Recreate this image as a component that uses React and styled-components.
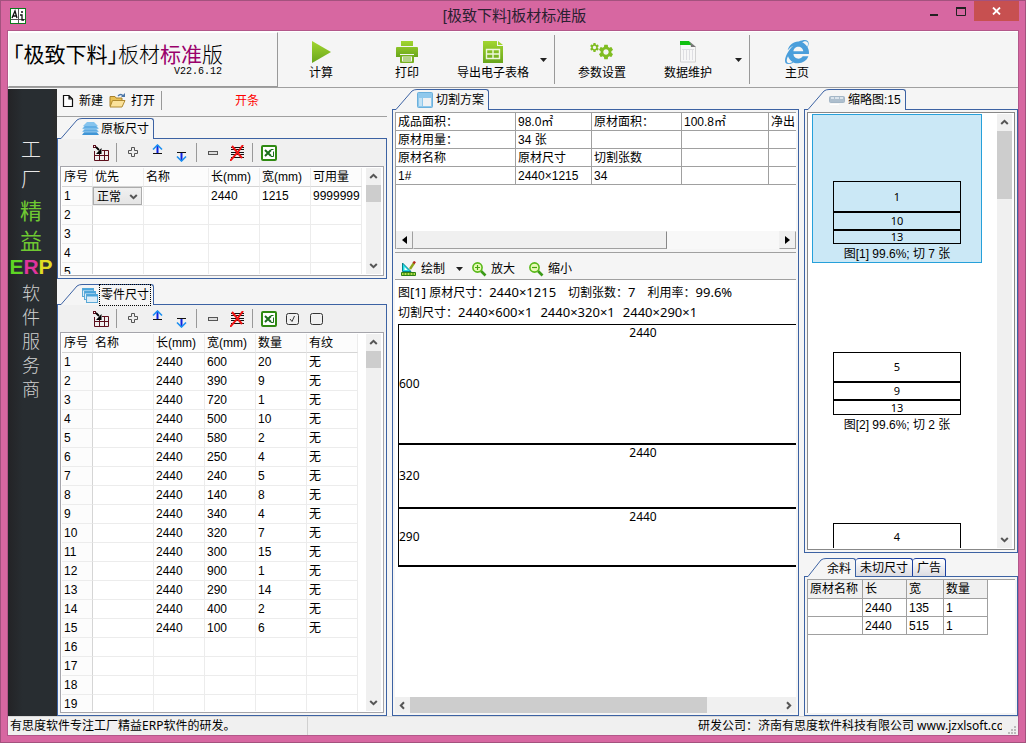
import React from 'react'
import styled, { createGlobalStyle } from 'styled-components'
import { FaInternetExplorer } from 'react-icons/fa'
import { MdSettings } from 'react-icons/md'

const boardCols = [
  { name: '序号', w: 31 },
  { name: '优先', w: 51 },
  { name: '名称', w: 65 },
  { name: '长(mm)', w: 51 },
  { name: '宽(mm)', w: 51 },
  { name: '可用量', w: 51 },
]

const partCols = [
  { name: '序号', w: 31 },
  { name: '名称', w: 61 },
  { name: '长(mm)', w: 51 },
  { name: '宽(mm)', w: 51 },
  { name: '数量', w: 51 },
  { name: '有纹', w: 51 },
]

const parts = [
  [600, 20], [390, 9], [720, 1], [500, 10], [580, 2],
  [250, 4], [240, 5], [140, 8], [340, 4], [320, 7],
  [300, 15], [900, 1], [290, 14], [400, 2], [100, 6],
  null, null, null, null,
]

const summaryCols = [120, 76, 90, 87, 27]
const summary = [
  ['成品面积：', '98.0㎡', '原材面积：', '100.8㎡', '净出'],
  ['原材用量：', '34 张', '', '', ''],
  ['原材名称', '原材尺寸', '切割张数', '', ''],
  ['1#', '2440×1215', '34', '', ''],
]

const strips = [
  { size: 600, h: 120 },
  { size: 320, h: 64 },
  { size: 290, h: 58 },
]

const thumbs = [
  { title: '图[1] 99.6%; 切 7 张', active: true, rows: [[1, 31], [10, 18], [13, 14]] },
  { title: '图[2] 99.6%; 切 2 张', rows: [[5, 30], [9, 18], [13, 15]] },
  { rows: [[4, 27]] },
]

const leftCols = [55, 44, 37, 44]

const Green = ({ id }) => (
  <linearGradient id={id} x1='0' y1='0' x2='0' y2='1'>
    <stop offset='0' stopColor='#a2d62f' />
    <stop offset='1' stopColor='#69a61c' />
  </linearGradient>
)

const PlayIcon = () => (
  <svg width='24' height='24' viewBox='0 0 24 24'>
    <defs><Green id='gPlay' /></defs>
    <path d='M3 1L22 12L3 23Z' fill='url(#gPlay)' />
  </svg>
)

const PrinterIcon = () => (
  <svg width='24' height='24' viewBox='0 0 24 24'>
    <defs><Green id='gPrint' /></defs>
    <path d='M6 1H18V6H6ZM2 7H22Q23 7 23 8V17H19V14H5V17H1V8Q1 7 2 7Z' fill='url(#gPrint)' />
    <path d='M5 15H19V22Q19 23 18 23H6Q5 23 5 22Z' fill='#75b01f' />
    <path d='M7 16.500H17V21.500H7Z' fill='#f5f5f5' />
    <path d='M8 18H16M8 20H16' stroke='#75b01f' />
  </svg>
)

const SheetIcon = () => (
  <svg width='24' height='24' viewBox='0 0 24 24'>
    <defs><Green id='gSheet' /></defs>
    <path d='M2 1H16V6H22V23H2Z' fill='url(#gSheet)' />
    <path d='M17 1L22 5H17Z' fill='#a2d62f' />
    <path d='M5.500 9.500H18.500V18.500H5.500ZM12 9.500V18.500M5.500 14H18.500' fill='none' stroke='#eef7dd' strokeWidth='1.400' />
  </svg>
)

const DataIcon = () => (
  <svg width='24' height='24' viewBox='0 0 24 24'>
    <path d='M4.500 2H14L19.500 7V22H4.500Z' fill='#f7f7f7' stroke='#d2d2d2' />
    <path d='M4 1H13L16 5H4Z' fill='#10c010' />
    <path d='M14 2L20 7H15Z' fill='#777' />
    <path d='M7.500 9V20M10.500 9V20M13.500 9V20M16.500 9V20M6 9.500H18' stroke='#dedee2' />
  </svg>
)

const AppIcon = () => (
  <svg width='16' height='16' viewBox='0 0 16 16'>
    <rect x='0.500' y='0.500' width='15' height='15' fill='#fff' stroke='#0b7a1d' />
    <path d='M8.500 1V15M1 11.500H15' stroke='#555' />
    <path d='M2 10L5 3L7 10M3 8H7M11 4H13M10 7H12V12H14' fill='none' stroke='#111' strokeWidth='1.300' />
  </svg>
)

const NewIcon = () => (
  <svg width='12' height='14' viewBox='0 0 12 14'>
    <path d='M1.500 1.500H7L10.500 5V12.500H1.500ZM7 1.500V5H10.500' fill='#fff' stroke='#111' strokeWidth='1.200' />
  </svg>
)

const OpenIcon = () => (
  <svg width='17' height='15' viewBox='0 0 17 15'>
    <path d='M1 3.500H6L7 5H13V13H1Z' fill='#e9c155' stroke='#a8812c' />
    <path d='M3.500 7.500H16L13 14H1Z' fill='#fbe29a' stroke='#b08a30' />
    <path d='M9 3Q12 0 14 3' fill='none' stroke='#4b76a8' strokeWidth='1.400' />
    <path d='M12 4H16V0Z' fill='#4b76a8' />
  </svg>
)

const LayersIcon = () => (
  <svg width='17' height='14' viewBox='0 0 17 14'>
    <path d='M3 9H14L17 13H0Z' fill='#3f95d6' />
    <path d='M3 6H14L17 10H0Z' fill='#5fabe2' stroke='#d8ecfa' strokeWidth='0.500' />
    <path d='M3 3H14L17 7H0Z' fill='#62aee4' stroke='#d8ecfa' strokeWidth='0.500' />
    <path d='M5 0H12L16 4H1Z' fill='#86c4ee' />
  </svg>
)

const CascadeIcon = () => (
  <svg width='17' height='16' viewBox='0 0 17 16'>
    <g fill='#dcedf8' stroke='#5ba9d6'>
      <rect x='0.500' y='1.500' width='11' height='8' />
      <rect x='2.500' y='4.500' width='11' height='8' />
      <rect x='4.500' y='7.500' width='11' height='8' />
    </g>
    <path d='M1 2.500H11M3 5.500H13M5 8.500H15' stroke='#4aa5dc' strokeWidth='2' />
  </svg>
)

const PlanIcon = () => (
  <svg width='17' height='16' viewBox='0 0 17 16'>
    <rect x='0.500' y='0.500' width='15' height='15' rx='1' fill='#8fc8ec' stroke='#6bb0dc' />
    <path d='M6 6H14V14H6Z' fill='#f0f1f3' />
    <path d='M2 6H5V14H2Z' fill='#c3e2f5' />
  </svg>
)

const ThumbIcon = () => (
  <svg width='17' height='9' viewBox='0 0 17 9'>
    <rect x='0.500' y='0.500' width='15' height='6' rx='1' fill='#aebfce' stroke='#a4b6c6' />
    <path d='M2 1H5V3H2ZM6 1H10V3H6ZM11 1H14V3H11Z' fill='#dbe4ec' />
    <path d='M1 8.500H10' stroke='#fff' />
  </svg>
)

const GridIcon = () => (
  <svg width='16' height='16' viewBox='0 0 16 16'>
    <path d='M1.500 6V15.500H15.500V5.500H9M1.500 10.500H15.500M6.500 9V15.500M11.500 5.500V15.500' fill='none' stroke='#5c0f1c' />
    <rect x='0.500' y='0.500' width='2' height='2' fill='#fff' stroke='#5c0f1c' />
    <path d='M3 2L6 5' stroke='#000' strokeWidth='1.800' />
    <path d='M8.500 3V9H3Z' fill='#000' />
  </svg>
)

const PlusIcon = () => (
  <svg width='11' height='11' viewBox='0 0 11 11'>
    <path d='M3.500 0.500H6.500V3.500H9.500V6.500H6.500V9.500H3.500V6.500H0.500V3.500H3.500Z' fill='#eee' stroke='#555' />
  </svg>
)

const MinusIcon = () => (
  <svg width='11' height='4' viewBox='0 0 11 4'>
    <rect x='0.500' y='0.500' width='9' height='3' fill='#ddd' stroke='#555' />
  </svg>
)

const UpIcon = () => (
  <svg width='11' height='18' viewBox='0 0 11 18'>
    <path d='M5.500 1V9' stroke='#0f22e0' strokeWidth='2' />
    <path d='M1 5.500L5.500 1L10 5.500' fill='none' stroke='#1b8ff0' strokeWidth='1.600' />
    <path d='M1 9.500H10' stroke='#111' />
  </svg>
)

const DownIcon = () => (
  <svg width='11' height='18' viewBox='0 0 11 18'>
    <path d='M1 8.500H10' stroke='#111' />
    <path d='M5.500 9V17' stroke='#0f22e0' strokeWidth='2' />
    <path d='M1 12.500L5.500 17L10 12.500' fill='none' stroke='#1b8ff0' strokeWidth='1.600' />
  </svg>
)

const ClearIcon = () => (
  <svg width='15' height='16' viewBox='0 0 15 16'>
    <path d='M1 2.500H14M1 4.500H14M1 7.500H14M1 9.500H14M1 12.500H14' stroke='#111' />
    <path d='M2 1L12 13M13 0L8 7L0 16' fill='none' stroke='#f01414' strokeWidth='2' />
  </svg>
)

const ExcelIcon = () => (
  <svg width='16' height='16' viewBox='0 0 16 16'>
    <rect x='1' y='1' width='14' height='14' rx='1' fill='#fff' stroke='#2f8a12' strokeWidth='2' />
    <path d='M4 5L10 11M10 5L4 11' stroke='#1c6f1c' strokeWidth='2' />
    <path d='M10 4.500H12.500M12.500 6.500V11.500H10' fill='none' stroke='#1c6f1c' />
  </svg>
)

const BoxIcon = ({ checked }) => (
  <svg width='14' height='14' viewBox='0 0 14 14'>
    <rect x='0.500' y='1.500' width='12' height='11' rx='2' fill='none' stroke='#333' />
    {checked && <path d='M4 7L6 9.500L8.500 4' fill='none' stroke='#333' />}
  </svg>
)

const DrawIcon = () => (
  <svg width='16' height='16' viewBox='0 0 16 16'>
    <path d='M1.500 2V10.500H10Z' fill='#22dfe6' stroke='#08808a' />
    <path d='M3.500 6V9H6.500Z' fill='#fff' />
    <path d='M0.500 11.500H14.500V14.500H0.500Z' fill='#b6e04a' stroke='#2d8012' />
    <path d='M3 12V14M6 12V14M9 12V14M12 12V14' stroke='#2d8012' />
    <path d='M9 8L13 2' stroke='#8fa51c' strokeWidth='2.400' />
    <path d='M12.500 2.500L14 0.500' stroke='#b42b1c' strokeWidth='2.400' />
  </svg>
)

const ZoomIcon = ({ plus }) => (
  <svg width='15' height='15' viewBox='0 0 15 15'>
    <path d='M9 9L13.500 13.500' stroke='#3b9a18' strokeWidth='2.600' />
    <circle cx='5.500' cy='5.500' r='4.600' fill='#e9fbb8' stroke='#58b818' strokeWidth='1.600' />
    <path d={plus ? 'M3 5.500H8M5.500 3V8' : 'M3 5.500H8'} stroke='#45a512' strokeWidth='1.200' />
  </svg>
)

const CaretIcon = () => (
  <svg width='7' height='4' viewBox='0 0 7 4'>
    <path d='M0 0H7L3.500 4Z' fill='#222' />
  </svg>
)

const turns = { up: 0, right: 90, down: 180, left: 270 }
const Chevron = ({ dir }) => (
  <svg width='9' height='9' viewBox='0 0 9 9'>
    <path d='M1.200 6L4.500 2.800L7.800 6' fill='none' stroke='#555' strokeWidth='2' transform={`rotate(${turns[dir]} 4.5 4.5)`} />
  </svg>
)

const Slant = ({ w, h }) => (
  <svg width={w} height={h} viewBox={`0 0 ${w} ${h}`}>
    <path d={`M0 ${h}L1 ${h - 0.5}L${w - 5} 2Q${w - 3} 0.500 ${w} 0.500V${h}Z`} fill='#f5f5f5' />
    <path d={`M0 ${h - 0.5}H1L${w - 5} 2Q${w - 3} 0.500 ${w} 0.500`} fill='none' stroke='#3c62a3' />
  </svg>
)

const PageTab = ({ icon, focus, children }) => (
  <Tab>
    <Slant w={icon ? 22 : 19} h={icon ? 21 : 19} />
    <TabLabel>
      {icon}
      <TabText $focus={focus}>{children}</TabText>
    </TabLabel>
  </Tab>
)

const EditBar = ({ checks }) => (
  <EditTools>
    <IconButton aria-label='表格'><GridIcon /></IconButton>
    <Divider />
    <IconButton aria-label='添加'><PlusIcon /></IconButton>
    <IconButton aria-label='上移'><UpIcon /></IconButton>
    <IconButton aria-label='下移'><DownIcon /></IconButton>
    <Divider />
    <IconButton aria-label='删除'><MinusIcon /></IconButton>
    <IconButton aria-label='清空'><ClearIcon /></IconButton>
    <Divider />
    <IconButton aria-label='Excel'><ExcelIcon /></IconButton>
    {checks && <IconButton aria-label='全选'><BoxIcon checked /></IconButton>}
    {checks && <IconButton aria-label='全不选'><BoxIcon /></IconButton>}
  </EditTools>
)

const VScroll = ({ thumb }) => (
  <VBar>
    <ScrollArrow aria-label='向上'><Chevron dir='up' /></ScrollArrow>
    <VThumb $size={thumb} />
    <ScrollArrow aria-label='向下'><Chevron dir='down' /></ScrollArrow>
  </VBar>
)

const DataHead = ({ cols }) => (
  <>
    <colgroup>{cols.map((c) => <Col key={c.name} $w={c.w} />)}</colgroup>
    <thead>
      <tr>{cols.map((c) => <th key={c.name}>{c.name}</th>)}</tr>
    </thead>
  </>
)

const App = () => {
  return (
    <Window>
      <GlobalStyle />
      <TitleBar>
        <AppIcon />
        <Title>[极致下料]板材标准版</Title>
        <Controls>
          <WinButton aria-label='最小化'>
            <svg width='8' height='10' viewBox='0 0 8 10'><path d='M0 9H8' stroke='#222' strokeWidth='2' /></svg>
          </WinButton>
          <WinButton aria-label='最大化'>
            <svg width='10' height='9' viewBox='0 0 10 9'><path d='M0.500 1H9.500V8.500H0.500Z' fill='none' stroke='#222' /><path d='M0 1H10' stroke='#222' strokeWidth='2' /></svg>
          </WinButton>
          <CloseButton aria-label='关闭'>
            <svg width='9' height='8' viewBox='0 0 9 8'><path d='M1 0.500L8 7.500M8 0.500L1 7.500' stroke='#fff' strokeWidth='1.800' /></svg>
          </CloseButton>
        </Controls>
      </TitleBar>

      <Client>
        <Header>
          <Logo>
            <LogoName>
              <b>「极致下料」</b>板材<em>标准</em>版
            </LogoName>
            <Version>V22.6.12</Version>
          </Logo>
          <BigButton><PlayIcon />计算</BigButton>
          <BigButton><PrinterIcon />打印</BigButton>
          <BigButton><SheetIcon />导出电子表格</BigButton>
          <DropButton aria-label='更多导出'><CaretIcon /></DropButton>
          <HeaderLine />
          <BigButton>
            <Gears><MdSettings size={11} /><MdSettings size={18} /></Gears>
            参数设置
          </BigButton>
          <BigButton><DataIcon />数据维护</BigButton>
          <DropButton aria-label='更多维护'><CaretIcon /></DropButton>
          <HeaderLine />
          <BigButton><FaInternetExplorer size={24} color='#4a9edb' />主页</BigButton>
        </Header>

        <Body>
          <Banner>
            <span>工</span>
            <span>厂</span>
            <strong>精</strong>
            <strong>益</strong>
            <Erp><i>E</i><i>R</i><i>P</i></Erp>
            {'软件服务商'.split('').map((c) => <small key={c}>{c}</small>)}
          </Banner>

          <Column>
            <FileBar>
              <FileButton><NewIcon />新建</FileButton>
              <FileButton><OpenIcon />打开</FileButton>
              <FileLine />
              <CutButton>开条</CutButton>
            </FileBar>

            <PageTab icon={<LayersIcon />}>原板尺寸</PageTab>
            <BoardPanel>
              <EditBar />
              <GridBox>
                <GridView>
                  <DataTable>
                    <DataHead cols={boardCols} />
                    <tbody>
                      <tr>
                        <td>1</td>
                        <SelectCell>
                          <Priority aria-label='优先' defaultValue='正常'>
                            <option>正常</option>
                            <option>优先</option>
                          </Priority>
                          <SelectMark><Chevron dir='down' /></SelectMark>
                        </SelectCell>
                        <td />
                        <td>2440</td>
                        <td>1215</td>
                        <td>9999999</td>
                      </tr>
                      {[2, 3, 4, 5].map((n) => (
                        <tr key={n}><td>{n}</td><td /><td /><td /><td /><td /></tr>
                      ))}
                    </tbody>
                  </DataTable>
                </GridView>
                <VScroll thumb={17} />
              </GridBox>
            </BoardPanel>

            <Gap />
            <PageTab icon={<CascadeIcon />} focus>零件尺寸</PageTab>
            <Panel>
              <EditBar checks />
              <GridBox>
                <GridView>
                  <DataTable>
                    <DataHead cols={partCols} />
                    <tbody>
                      {parts.map((p, i) => (
                        <tr key={i}>
                          <td>{i + 1}</td>
                          <td />
                          <td>{p && 2440}</td>
                          <td>{p && p[0]}</td>
                          <td>{p && p[1]}</td>
                          <td>{p && '无'}</td>
                        </tr>
                      ))}
                    </tbody>
                  </DataTable>
                </GridView>
                <VScroll thumb={17} />
              </GridBox>
            </Panel>
          </Column>

          <Column>
            <PageTab icon={<PlanIcon />}>切割方案</PageTab>
            <Panel>
              <SummaryBox>
                <GridView>
                  <SummaryTable>
                    <colgroup>{summaryCols.map((w) => <Col key={w} $w={w} />)}</colgroup>
                    <tbody>
                      {summary.map((row, i) => (
                        <tr key={i}>{row.map((c, j) => <td key={j}>{c}</td>)}</tr>
                      ))}
                    </tbody>
                  </SummaryTable>
                </GridView>
                <ClassicBar>
                  <ClassicArrow aria-label='向左'>
                    <svg width='5' height='8' viewBox='0 0 5 8'><path d='M5 0V8L0 4Z' /></svg>
                  </ClassicArrow>
                  <ClassicThumb />
                  <ClassicTrack />
                  <ClassicArrow aria-label='向右'>
                    <svg width='5' height='8' viewBox='0 0 5 8'><path d='M0 0V8L5 4Z' /></svg>
                  </ClassicArrow>
                </ClassicBar>
              </SummaryBox>
              <DrawBar>
                <DrawButton><DrawIcon />绘制</DrawButton>
                <DropButton aria-label='更多绘制'><CaretIcon /></DropButton>
                <DrawButton><ZoomIcon plus />放大</DrawButton>
                <DrawButton><ZoomIcon />缩小</DrawButton>
              </DrawBar>
              <Canvas>
                <Info>
                  <span>图<Num>[1]</Num> 原材尺寸：<Num>2440×1215</Num></span>
                  <span>切割张数：<Num>7</Num></span>
                  <span>利用率：<Num>99.6%</Num></span>
                </Info>
                <Info $tight>
                  <span>切割尺寸：<Num>2440×600×1</Num></span>
                  <Num>2440×320×1</Num>
                  <Num>2440×290×1</Num>
                </Info>
                <Sheet>
                  {strips.map((s) => (
                    <Strip key={s.size} $h={s.h}>
                      <StripTop>2440</StripTop>
                      <StripSide>{s.size}</StripSide>
                    </Strip>
                  ))}
                </Sheet>
              </Canvas>
              <HBar>
                <ScrollArrow aria-label='向左'><Chevron dir='left' /></ScrollArrow>
                <HTrack><HThumb /></HTrack>
                <ScrollArrow aria-label='向右'><Chevron dir='right' /></ScrollArrow>
              </HBar>
            </Panel>
          </Column>

          <Column>
            <PageTab icon={<ThumbIcon />}>缩略图:15</PageTab>
            <Panel>
              <ThumbBox>
                <ThumbList>
                  {thumbs.map((t, i) => (
                    <ThumbItem key={i} $active={t.active}>
                      {t.rows.map(([n, h]) => <ThumbStrip key={n} $h={h}>{n}</ThumbStrip>)}
                      {t.title && <p>{t.title}</p>}
                    </ThumbItem>
                  ))}
                </ThumbList>
                <VScroll thumb={68} />
              </ThumbBox>
            </Panel>
            <Gap />
            <TabRow>
              <PageTab>余料</PageTab>
              <BackTab>未切尺寸</BackTab>
              <BackTab>广告</BackTab>
            </TabRow>
            <LeftPanel>
              <LeftBox>
                <LineTable>
                  <colgroup>{leftCols.map((w, i) => <Col key={i} $w={w} />)}</colgroup>
                  <thead>
                    <tr><th>原材名称</th><th>长</th><th>宽</th><th>数量</th></tr>
                  </thead>
                  <tbody>
                    <tr><td /><td>2440</td><td>135</td><td>1</td></tr>
                    <tr><td /><td>2440</td><td>515</td><td>1</td></tr>
                  </tbody>
                </LineTable>
              </LeftBox>
            </LeftPanel>
          </Column>
        </Body>

        <StatusBar>
          <StatusText>有思度软件专注工厂精益ERP软件的研发。</StatusText>
          <Company>研发公司：济南有思度软件科技有限公司 www.jzxlsoft.com</Company>
          <Grip width='9' height='9' viewBox='0 0 9 9'>
            <path d='M6 0H8V2H6ZM3 3H5V5H3ZM6 3H8V5H6ZM0 6H2V8H0ZM3 6H5V8H3ZM6 6H8V8H6Z' fill='#bbb' />
          </Grip>
        </StatusBar>
      </Client>
    </Window>
  )
}

const GlobalStyle = createGlobalStyle`
  *{
    box-sizing: border-box;
  }
  body{
    margin: 0;
    color: #000;
    font-family: "Liberation Sans", "Noto Sans CJK SC", sans-serif;
    font-size: 12px;
    line-height: 18px;
  }
  button, select{
    margin: 0;
    padding: 0;
    border: 0;
    background: none;
    color: inherit;
    font: inherit;
  }
  svg{
    display: block;
    flex: none;
  }
`
const Window = styled.div`
  display: flex;
  flex-direction: column;
  height: 100vh;
  min-height: 600px;
  padding: 0 6px 6px;
  border: 1px solid #a3527e;
  background: #d767a1;
`
const TitleBar = styled.header`
  display: grid;
  grid-template-columns: 1fr auto 1fr;
  align-items: center;
  height: 29px;
  padding-left: 3px;
`
const Title = styled.h1`
  margin: 0;
  color: #2b2030;
  font-size: 15px;
  font-weight: 400;
`
const Controls = styled.div`
  display: flex;
  justify-content: flex-end;
  align-self: start;
`
const WinButton = styled.button`
  display: flex;
  justify-content: center;
  align-items: center;
  width: 27px;
  height: 20px;
`
const CloseButton = styled(WinButton)`
  width: 45px;
  background: #c75050;
`
const Client = styled.div`
  display: flex;
  flex: 1;
  flex-direction: column;
  min-height: 0;
  border: 1px solid #b3578a;
  background: #f5f5f5;
`
const Header = styled.div`
  display: flex;
  flex: none;
  height: 57px;
  border-top: 1px solid #fff;
  border-bottom: 1px solid #a0a0a0;
`
const Logo = styled.div`
  display: flex;
  flex-direction: column;
  width: 270px;
  padding: 6px 0 0 4px;
  border: 1px solid #fff;
  border-right-color: #999;
  border-bottom-color: #999;
`
const LogoName = styled.div`
  font-family: "Noto Sans CJK SC", sans-serif;
  font-feature-settings: "halt";
  font-size: 21px;
  font-weight: 300;
  line-height: 28px;
  white-space: nowrap;
  b{
    font-weight: 400;
  }
  em{
    color: #99006b;
    font-style: normal;
    font-weight: 400;
  }
`
const Version = styled.div`
  width: 209px;
  font-family: "Liberation Mono", monospace;
  font-size: 10px;
  line-height: 10px;
  text-align: right;
`
const BigButton = styled.button`
  display: flex;
  flex-direction: column;
  align-items: center;
  width: 86px;
  padding-top: 8px;
  line-height: 18px;
`
const Gears = styled.span`
  display: flex;
  align-items: center;
  height: 24px;
  color: #80bd22;
  svg:first-child{
    align-self: flex-start;
    margin: 2px -3px 0 0;
  }
`
const DropButton = styled.button`
  display: flex;
  justify-content: center;
  align-items: center;
  width: 14px;
`
const HeaderLine = styled.div`
  width: 1px;
  margin: 3px 4px;
  background: #999;
`
const Body = styled.main`
  display: grid;
  flex: 1;
  grid-template-columns: 49px 330px minmax(0, 1fr) 214px;
  min-height: 0;
  padding-top: 1px;
`
const Banner = styled.aside`
  display: flex;
  flex-direction: column;
  align-items: center;
  padding: 45px 3px 0 0;
  background: linear-gradient(90deg, #232326, #282d31 30%, #282d31 85%, #2c2c2c);
  color: #e8e8e8;
  font-family: "Noto Sans CJK SC", sans-serif;
  font-size: 20px;
  font-weight: 300;
  line-height: 30px;
  strong{
    color: #6fc932;
    font-size: 22px;
    font-weight: 400;
  }
  small{
    color: #d0d0d0;
    font-size: 18px;
    line-height: 24px;
  }
`
const Erp = styled.div`
  font-family: "Liberation Sans", sans-serif;
  font-size: 21px;
  font-weight: 700;
  line-height: 26px;
  i{
    color: #5fd424;
    font-style: normal;
  }
  i:nth-child(2){
    color: #e0349c;
  }
  i:nth-child(3){
    color: #e0dc24;
  }
`
const Column = styled.section`
  display: flex;
  flex-direction: column;
  min-width: 0;
  min-height: 0;
  &:nth-child(3){
    margin: 0 5px;
  }
`
const FileBar = styled.div`
  display: flex;
  flex: none;
  align-items: center;
  height: 28px;
  margin-bottom: 1px;
  padding: 0 0 4px 5px;
  border-bottom: 1px solid #a0a0a0;
`
const FileButton = styled.button`
  display: flex;
  align-items: center;
  gap: 5px;
  margin-right: 6px;
`
const FileLine = styled.div`
  width: 1px;
  height: 19px;
  background: #999;
`
const CutButton = styled.button`
  margin-left: 73px;
  color: #f00;
`
const Tab = styled.div`
  display: flex;
  position: relative;
  flex: none;
  margin: 0 0 -1px 3px;
`
const TabLabel = styled.div`
  display: flex;
  align-items: center;
  gap: 1px;
  padding-right: 3px;
  border-top: 1px solid #3c62a3;
  border-right: 1px solid #3c62a3;
  border-top-right-radius: 3px;
  background: #f5f5f5;
`
const TabText = styled.span`
  padding: 1px 1px 0;
  outline: ${({ $focus }) => ($focus ? '1px dotted #000' : 'none')};
  line-height: 19px;
`
const TabRow = styled.div`
  display: flex;
  flex: none;
  height: 18px;
  ${Tab}{
    height: 19px;
  }
  ${TabText}{
    line-height: 18px;
  }
`
const BackTab = styled.button`
  height: 18px;
  padding: 1px 4px 0;
  border: 1px solid #1b3fa0;
  border-bottom: 0;
  border-left-width: 0;
  border-radius: 3px 3px 0 0;
  background: linear-gradient(#fff, #dcdce2);
  line-height: 17px;
`
const Panel = styled.div`
  display: flex;
  flex: 1;
  flex-direction: column;
  min-height: 0;
  padding: 2px;
  border: 1px solid #3c62a3;
  background: #f5f5f5;
`
const BoardPanel = styled(Panel)`
  flex: 0 0 141px;
`
const LeftPanel = styled(Panel)`
  flex: 0 0 140px;
`
const Gap = styled.div`
  flex: none;
  height: 5px;
`
const EditTools = styled.div`
  display: flex;
  flex: none;
  align-items: center;
  height: 27px;
  margin: -2px -2px 0;
  padding-left: 31px;
  background: #f0f0f0;
`
const IconButton = styled.button`
  display: flex;
  justify-content: center;
  align-items: center;
  width: 24px;
  height: 24px;
`
const Divider = styled.div`
  width: 1px;
  height: 19px;
  margin: 0 4px 0 3px;
  background: #999;
`
const GridBox = styled.div`
  display: flex;
  flex: 1;
  min-height: 0;
  padding: 1px 2px 1px 1px;
  border: 1px solid #a5a5ab;
  background: #fff;
`
const GridView = styled.div`
  flex: 1;
  min-width: 0;
  overflow: hidden;
`
const Col = styled.col`
  width: ${({ $w }) => $w}px;
`
const DataTable = styled.table`
  width: 0;
  table-layout: fixed;
  border-spacing: 0;
  th, td{
    height: 19px;
    padding: 0 0 0 2px;
    border-right: 1px solid #ececec;
    border-bottom: 1px solid #ececec;
    font-weight: 400;
    text-align: left;
    white-space: nowrap;
  }
  th{
    padding-top: 1px;
    border-bottom-color: #d5d5d5;
    background: #fcfcfc;
    line-height: 17px;
  }
  td:first-child{
    border-right-color: #d5d5d5;
    background: #fcfcfc;
  }
`
const SelectCell = styled.td`
  position: relative;
  && {
    padding: 0;
  }
`
const Priority = styled.select`
  display: block;
  width: 49px;
  height: 18px;
  padding-left: 3px;
  border: 1px solid #acacac;
  background: linear-gradient(#f0f0f0, #e5e5e5);
  appearance: none;
`
const SelectMark = styled.span`
  position: absolute;
  top: 5px;
  right: 5px;
  pointer-events: none;
`
const VBar = styled.div`
  display: flex;
  flex: none;
  flex-direction: column;
  width: 15px;
  background: #f0f0f0;
  button:last-child{
    margin-top: auto;
  }
`
const ScrollArrow = styled.button`
  display: flex;
  flex: none;
  justify-content: center;
  align-items: center;
  width: 15px;
  height: 17px;
`
const VThumb = styled.div`
  height: ${({ $size }) => $size}px;
  background: #cdcdcd;
`
const SummaryBox = styled.div`
  display: flex;
  flex: 0 0 137px;
  flex-direction: column;
  border: 1px solid #a0a0a0;
  border-right: 0;
  border-bottom: 0;
  background: #fff;
`
const LineTable = styled.table`
  width: 0;
  table-layout: fixed;
  border-spacing: 0;
  th, td{
    height: 18px;
    padding: 1px 0 0 2px;
    border-right: 1px solid #a0a0a0;
    border-bottom: 1px solid #a0a0a0;
    font-weight: 400;
    line-height: 16px;
    text-align: left;
    white-space: nowrap;
  }
  th{
    height: 19px;
    background: #f0f0f0;
    line-height: 17px;
  }
`
const SummaryTable = styled(LineTable)`
  td:last-child{
    border-right: 0;
  }
`
const ClassicBar = styled.div`
  display: flex;
  flex: none;
  height: 18px;
  background: #f8f8f8;
`
const ClassicArrow = styled.button`
  display: flex;
  justify-content: center;
  align-items: center;
  width: 17px;
  border: 1px solid #f0f0f0;
  border-right-color: #a0a0a0;
  border-bottom-color: #a0a0a0;
  background: #f0f0f0;
`
const ClassicThumb = styled.div`
  flex: 253;
  border: 1px solid #f0f0f0;
  border-right-color: #888;
  border-bottom-color: #a0a0a0;
  background: #f0f0f0;
`
const ClassicTrack = styled.div`
  flex: 113;
`
const DrawButton = styled.button`
  display: flex;
  align-items: center;
  gap: 4px;
`
const DrawBar = styled.div`
  display: flex;
  flex: none;
  align-items: center;
  height: 28px;
  margin-top: 3px;
  padding: 6px 0 0 6px;
  border-top: 1px solid #a0a0a0;
  border-bottom: 1px solid #a0a0a0;
  ${DropButton}{
    margin: 0 6px 0 7px;
  }
  ${DrawButton} + ${DrawButton}{
    margin-left: 14px;
  }
`
const Canvas = styled.div`
  flex: 1;
  min-height: 0;
  padding: 2px 0 0 3px;
  overflow: hidden;
  background: #fff;
  font-family: "Noto Sans", "Noto Sans CJK SC", sans-serif;
`
const Info = styled.div`
  display: flex;
  gap: ${({ $tight }) => ($tight ? 8 : 12)}px;
  height: 20px;
  line-height: 20px;
  white-space: nowrap;
`
const Num = styled.span`
  font-size: 13px;
`
const Sheet = styled.div`
  width: 490px;
  margin-top: 2px;
  border-bottom: 1px solid #000;
`
const Strip = styled.div`
  display: grid;
  grid-template-rows: 1fr auto 1fr;
  height: ${({ $h }) => $h}px;
  border: 1px solid #000;
  line-height: 16px;
`
const StripTop = styled.span`
  text-align: center;
`
const StripSide = styled.span`
  line-height: 20px;
`
const HBar = styled.div`
  display: flex;
  flex: none;
  height: 16px;
  background: #f0f0f0;
`
const HTrack = styled.div`
  flex: 1;
`
const HThumb = styled.div`
  width: 80%;
  height: 100%;
  background: #cdcdcd;
`
const ThumbBox = styled(GridBox)`
  padding: 1px 2px 1px 4px;
  border-color: #888;
`
const ThumbList = styled.div`
  flex: 1;
  overflow: hidden;
`
const ThumbItem = styled.div`
  display: flex;
  flex-direction: column;
  align-items: center;
  width: 170px;
  height: 149px;
  margin-bottom: 22px;
  padding-top: 66px;
  border: 1px solid ${({ $active }) => ($active ? '#26a0da' : 'transparent')};
  background: ${({ $active }) => ($active ? '#cbe8f6' : 'none')};
  p{
    margin: 0;
    line-height: 20px;
  }
`
const ThumbStrip = styled.div`
  display: flex;
  flex: none;
  justify-content: center;
  align-items: center;
  width: 128px;
  height: ${({ $h }) => $h}px;
  border: 1px solid #000;
  font-family: "Noto Sans", sans-serif;
  font-size: 11px;
  line-height: 12px;
`
const LeftBox = styled.div`
  flex: 1;
  border-top: 1px solid #a0a0a0;
  border-left: 1px solid #a0a0a0;
  background: #fff;
`
const StatusBar = styled.footer`
  display: flex;
  flex: none;
  align-items: center;
  height: 19px;
  padding-right: 1px;
  border-top: 1px solid #d9d9d9;
  background: #f0f0f0;
  font-family: "Noto Sans", "Noto Sans CJK SC", sans-serif;
  white-space: nowrap;
`
const StatusText = styled.div`
  width: 300px;
  padding-left: 2px;
  border-right: 1px solid #d0d0d0;
`
const Company = styled.div`
  width: 304px;
  margin: 0 6px 0 auto;
  overflow: hidden;
`
const Grip = styled.svg`
  align-self: flex-end;
`

export default App
